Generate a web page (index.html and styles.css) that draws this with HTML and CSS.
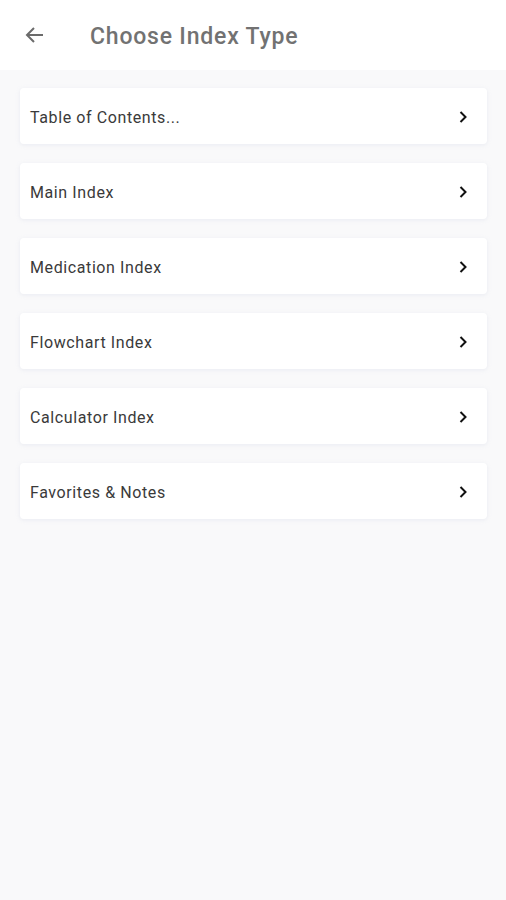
FILE: index.html
```html
<!DOCTYPE html>
<html lang="en">
<head>
    <meta charset="UTF-8">
    <meta name="viewport" content="width=device-width, initial-scale=1.0">
    <title>Choose Index Type</title>
    <link rel="stylesheet" href="styles.css">
</head>
<body>

    <header class="top-bar">
        <button class="back-btn" aria-label="Back">
            <svg width="24" height="24" viewBox="0 0 24 24"><path d="M20 12H5M11 5l-7 7 7 7" fill="none" stroke="#6b6b6b" stroke-width="2"/></svg>
        </button>
        <h1 class="title">Choose Index Type</h1>
    </header>

    <ul class="index-list">
        <li class="index-item"><span>Table of Contents...</span><svg class="chevron" viewBox="0 0 24 24"><path d="M9 6l6 6-6 6" fill="none" stroke="#111" stroke-width="2.4"/></svg></li>
        <li class="index-item"><span>Main Index</span><svg class="chevron" viewBox="0 0 24 24"><path d="M9 6l6 6-6 6" fill="none" stroke="#111" stroke-width="2.4"/></svg></li>
        <li class="index-item"><span>Medication Index</span><svg class="chevron" viewBox="0 0 24 24"><path d="M9 6l6 6-6 6" fill="none" stroke="#111" stroke-width="2.4"/></svg></li>
        <li class="index-item"><span>Flowchart Index</span><svg class="chevron" viewBox="0 0 24 24"><path d="M9 6l6 6-6 6" fill="none" stroke="#111" stroke-width="2.4"/></svg></li>
        <li class="index-item"><span>Calculator Index</span><svg class="chevron" viewBox="0 0 24 24"><path d="M9 6l6 6-6 6" fill="none" stroke="#111" stroke-width="2.4"/></svg></li>
        <li class="index-item"><span>Favorites &amp; Notes</span><svg class="chevron" viewBox="0 0 24 24"><path d="M9 6l6 6-6 6" fill="none" stroke="#111" stroke-width="2.4"/></svg></li>
    </ul>

</body>
</html>
```
FILE: styles.css
```css
/* General Reset */
* {
    margin: 0;
    padding: 0;
    box-sizing: border-box;
}

body {
    font-family: Roboto, 'Noto Sans', sans-serif;
    background-color: #f9f9fa;
    color: #333;
    min-height: 900px;
}

/* Top Bar */
.top-bar {
    height: 70px;
    background-color: #fff;
    display: flex;
    align-items: center;
    padding-left: 23px;
}

.back-btn {
    border: none;
    background: none;
    width: 24px;
    height: 24px;
    display: flex;
    align-items: center;
    justify-content: center;
    margin-right: 43px;
}

.title {
    font-size: 23px;
    font-weight: 500;
    letter-spacing: 0.8px;
    color: #727272;
    margin-top: 2px;
}

/* List */
.index-list {
    list-style-type: none;
    padding: 18px 19px 0 20px;
    display: flex;
    flex-direction: column;
    gap: 19px;
}

.index-item {
    height: 56px;
    background-color: #fff;
    border-radius: 4px;
    box-shadow: 0 1px 4px rgba(200, 205, 225, 0.3);
    display: flex;
    align-items: center;
    justify-content: space-between;
    padding: 2px 14px 0 10px;
    font-size: 16px;
    letter-spacing: 0.6px;
    color: #3a3a3a;
}

.chevron {
    width: 20px;
    height: 20px;
}
```
